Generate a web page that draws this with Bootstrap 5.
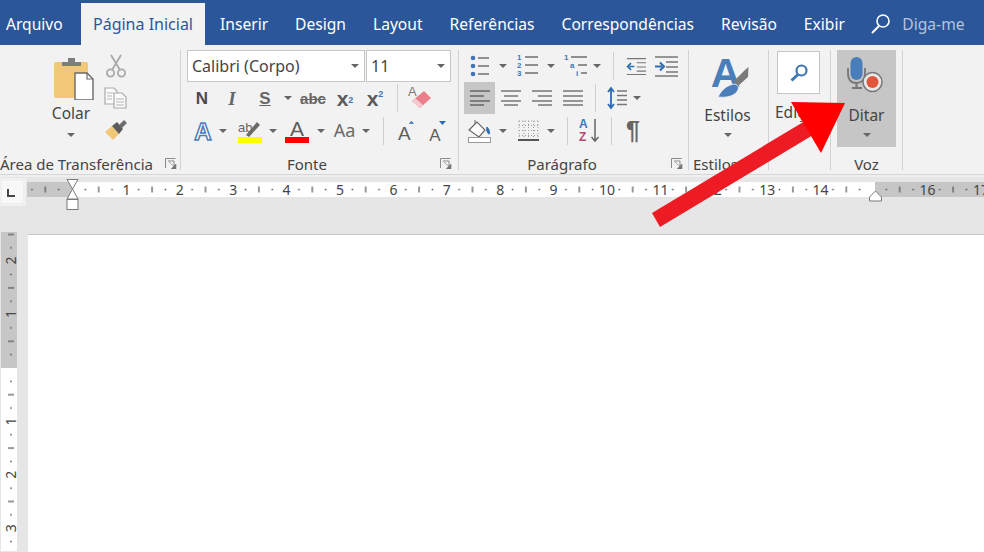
<!DOCTYPE html>
<html lang="pt">
<head>
<meta charset="utf-8">
<title>Word</title>
<link href="https://cdn.jsdelivr.net/npm/bootstrap@5.3.0/dist/css/bootstrap.min.css" rel="stylesheet">
<style>
html,body{height:100%;overflow:hidden;margin:0;background:#fff}
body{font-family:"Noto Sans","Open Sans",sans-serif;font-size:15px;color:#444;width:984px;height:552px;position:relative}
.tabbar{height:45px;background:#2b579a;padding-top:3px;flex-wrap:nowrap;white-space:nowrap}
.tabbar .nav-link{color:#fff;padding:0 13.5px;height:42px;line-height:42px;font-size:15.6px;border:0}
.tabbar .nav-link:hover{color:#fff}
.tabbar .first{padding:0 0 0 6px;width:81px}
.tabbar .nav-link.active{background:#f2f2f2;color:#2b579a;padding:0;width:124px;text-align:center;font-size:16px}
.tabbar .afteractive{padding-left:15px}
.tabbar .srch{padding:0 11px 0 13px;display:flex;align-items:center}
.tabbar .hint{color:#b4c4de;padding:0}
.ribbon{height:130px;background:#f2f2f2;padding-top:5px;border-bottom:1px solid #d6d6d6;flex:none}
.grp{height:120px;border-right:1px solid #d2d2d2;position:relative;flex:none}
.g1{width:181px}.g2{width:278px;padding-left:6px}.g3{width:230px;padding-left:5px}.g4{width:80px}.g5{width:62px}.g6{width:72px}
.gbody{height:108px}
.glabel{height:12px;line-height:12px;font-size:15px;color:#444;white-space:nowrap}
.lbl1{margin-right:12px}.lbl2{margin-right:13px}.lbl3{margin-right:11px}.lbl4{margin-right:26px}
.launch{width:12px;height:11px;flex:none;display:block;margin-right:5px}
.launch2{margin-right:6px}
.rw{height:32px}
.rw3{height:33px}
.tb{display:flex;align-items:center;justify-content:center;flex:none;height:100%}
.big{display:flex;flex-direction:column;align-items:center;flex:none;font-size:15.5px;color:#444}
.big .cap{height:22px;line-height:22px}
.cr{display:block;width:0;height:0;border-left:4px solid transparent;border-right:4px solid transparent;border-top:4px solid #666}
.colar{width:58px;margin-left:42px}
.colar svg{margin:7px 0 2px 5px}
.crw{margin-top:9px}
.smallcol{width:32px}
.smallcol .tb{height:32px}
.w6{width:6px}.w8{width:8px}.w10{width:10px}.w11{width:11px}.w12{width:12px}.w14{width:14px}.w16{width:16px}.w18{width:18px}.w20{width:20px}.w24{width:24px}.w26{width:26px}.w28{width:28px}.w30{width:30px}.w31{width:31px}.w32{width:32px}.w34{width:34px}.w36{width:36px}.w37{width:37px}.w38{width:38px}.w40{width:40px}.w42{width:42px}.w44{width:44px}
.combo{height:32px;background:#fff;border:1px solid #c6c6c6;display:flex;align-items:center;justify-content:space-between;font-size:16px;color:#444;padding:0 5px 0 4px}
.c1{width:178px}.c2{width:85px;margin-left:1px}
.gl{font-family:"Liberation Sans",sans-serif;color:#4a4a4a;line-height:1}
.gN{font-weight:700;font-size:17px}
.gI{font-family:"Liberation Serif",serif;font-style:italic;font-weight:700;font-size:19px;color:#666}
.gS{font-weight:700;font-size:17px;text-decoration:underline;color:#666}
.gabc{font-size:15px;font-weight:700;text-decoration:line-through;color:#666}
.gx{font-weight:700;font-size:21px;color:#5a5a5a}
.gx sub,.gx sup{font-size:9px;color:#3f75b5;font-weight:700}
.gAa{font-size:18px;color:#6a6a6a;font-family:"Noto Sans",sans-serif}
.gP{font-weight:700;font-size:25px;color:#666}
.vs{display:block;width:1px;height:28px;background:#cfcfcf}
.sel{background:#c6c6c6}
.estilos{width:59px;margin-left:9px}
.estilos svg{margin:-1px 0 0}
.estilos .cap{margin-top:5px}
.crw2{margin-top:7px}
.edit{margin-left:8px;width:43px}
.ebox{width:43px;height:43px;background:#fff;border:1px solid #c6c6c6;margin-top:1px;flex:none}
.ecap{height:22px;line-height:22px;font-size:15.5px;margin-top:7px;white-space:nowrap;margin-left:-2px;align-self:flex-start}
.ditar{width:59px;margin-left:6px;height:97px;background:#c6c6c6}
.ditar svg{margin:4px 0 0}
.ditar .cap{margin-top:10px}
.band{height:55px;background:#e6e6e6;margin-top:2px;flex:none;box-shadow:0 -2px 0 #efefef}
.band svg,.vrul svg{display:block}
.rtxt{font-family:"Noto Sans",sans-serif;font-size:14px;fill:#444;text-anchor:middle}
.lower{flex:1 1 auto;min-height:0;background:#e6e6e6}
.vrul{width:28px;background:#e6e6e6;flex:none}
.sheet{flex:1 1 auto;background:#fff;border-top:1px solid #c6c6c6;margin-top:2px}
.overlay{position:absolute;left:0;top:0;pointer-events:none}
</style>
</head>
<body class="d-flex flex-column">
<ul class="nav tabbar flex-shrink-0">
  <li class="nav-item"><a class="nav-link first" href="#">Arquivo</a></li>
  <li class="nav-item"><a class="nav-link active" href="#">Página Inicial</a></li>
  <li class="nav-item"><a class="nav-link afteractive" href="#">Inserir</a></li>
  <li class="nav-item"><a class="nav-link" href="#">Design</a></li>
  <li class="nav-item"><a class="nav-link" href="#">Layout</a></li>
  <li class="nav-item"><a class="nav-link" href="#">Referências</a></li>
  <li class="nav-item"><a class="nav-link" href="#">Correspondências</a></li>
  <li class="nav-item"><a class="nav-link" href="#">Revisão</a></li>
  <li class="nav-item"><a class="nav-link" href="#">Exibir</a></li>
  <li class="nav-item srch"><svg width="20" height="22" viewBox="0 0 20 22"><circle cx="12" cy="8" r="6" fill="none" stroke="#fff" stroke-width="1.6"/><path d="M8 13 1 20" stroke="#fff" stroke-width="2"/></svg></li>
  <li class="nav-item"><a class="nav-link hint" href="#">Diga-me</a></li>
</ul>

<div class="ribbon d-flex">
  <!-- Área de Transferência -->
  <div class="grp g1">
    <div class="gbody d-flex">
      <div class="big colar">
        <svg width="40" height="43" viewBox="0 0 40 43"><rect x="0" y="5" width="34" height="36" rx="2" fill="#f0c878"/><path d="M8 9V5h6V1h7v4h6v4z" fill="#7d7d7d"/><path d="M21 16h12l6 6v21H21z" fill="#fff" stroke="#6a6a6a" stroke-width="1.4"/><path d="M33 16v6h6" fill="none" stroke="#6a6a6a" stroke-width="1.2"/></svg>
        <span class="cap">Colar</span>
        <span class="crw"><i class="cr"></i></span>
      </div>
      <div class="smallcol d-flex flex-column">
        <span class="tb"><svg width="22" height="24" viewBox="0 0 22 24"><g fill="none" stroke="#a9a9a9" stroke-width="1.8"><path d="M6 1 15 16M16 1 7 16"/><circle cx="5.5" cy="19" r="3.6"/><circle cx="16.5" cy="19" r="3.6"/></g></svg></span>
        <span class="tb"><svg width="24" height="22" viewBox="0 0 24 22"><g fill="#fafafa" stroke="#a9a9a9" stroke-width="1.2"><path d="M1 1h9l3 3v13H1z"/><path d="M10 6h8l4 4v11H10z"/></g><path d="M3 6h6M3 9h5M3 12h5M12 12h8M12 15h8M12 18h8" stroke="#b5b5b5"/></svg></span>
        <span class="tb"><svg width="24" height="22" viewBox="0 0 24 22"><path d="M1 13 8 7l7 8-6 6z" fill="#f0c878"/><path d="M8 7l5-4 6 7-4 5z" fill="#5c5c5c"/><path d="M15 6l5-5 3 3-5 5z" fill="#6c6c6c"/></svg></span>
      </div>
    </div>
    <div class="d-flex">
      <div class="glabel lbl1 flex-grow-1 text-center">Área de Transferência</div>
      <svg class="launch" viewBox="0 0 12 11"><path d="M.5 10V.5h10M3 3h6v7" fill="none" stroke="#8a8a8a"/><path d="M4 4l7 6.5M11 6v5H6z" fill="#777" stroke="#777" stroke-width=".6"/></svg>
    </div>
  </div>

  <!-- Fonte -->
  <div class="grp g2">
    <div class="gbody">
      <div class="rw d-flex">
        <div class="combo c1"><span>Calibri (Corpo)</span><i class="cr"></i></div>
        <div class="combo c2"><span>11</span><i class="cr"></i></div>
      </div>
      <div class="rw d-flex">
        <span class="tb w30 gl gN">N</span>
        <span class="tb w30 gl gI">I</span>
        <span class="tb w36 gl gS">S</span>
        <span class="tb w10"><i class="cr"></i></span>
        <span class="tb w40 gl gabc">abc</span>
        <span class="tb w24 gl gx">x<sub>2</sub></span>
        <span class="tb w36 gl gx">x<sup>2</sup></span>
        <span class="tb w8"><i class="vs"></i></span>
        <span class="tb w38"><svg width="24" height="26" viewBox="0 0 24 26"><text x="0" y="11" font-family="Liberation Sans" font-size="13" fill="#7a7a7a">A</text><path d="M4 16 16 6l7 7-11 10z" fill="#ea7f8b"/><path d="M4 16l8 7 3-3-8-7z" fill="#f6c9ce"/></svg></span>
      </div>
      <div class="rw rw3 d-flex">
        <span class="tb w32"><svg width="22" height="30" viewBox="0 -3 22 30"><text x="11" y="21" text-anchor="middle" font-family="Liberation Sans" font-weight="700" font-size="24" fill="#fff" stroke="#4a7ebb" stroke-width="1.5">A</text></svg></span>
        <span class="tb w8"><i class="cr"></i></span>
        <span class="tb w40 ps-1"><svg width="25" height="26" viewBox="0 0 25 26"><text x="1" y="14" font-family="Liberation Sans" font-size="13" fill="#666">ab</text><path d="M9 17 20 4l3 3-11 12z" fill="#6a6a6a"/><rect x="1" y="19" width="24" height="6" fill="#ffff00"/></svg></span>
        <span class="tb w11"><i class="cr"></i></span>
        <span class="tb w38"><svg width="24" height="26" viewBox="0 0 24 26"><text x="12" y="18" text-anchor="middle" font-family="Liberation Sans" font-size="21" fill="#5e5e5e">A</text><rect x="0" y="19" width="24" height="6" fill="#ff0000"/></svg></span>
        <span class="tb w10"><i class="cr"></i></span>
        <span class="tb w37 gAa">Aa</span>
        <span class="tb w6"><i class="cr"></i></span>
        <span class="tb w28"><i class="vs"></i></span>
        <span class="tb w18"><svg width="20" height="30" viewBox="0 -3 20 30"><text x="8" y="22" text-anchor="middle" font-family="Liberation Sans" font-size="21" fill="#5e5e5e">A</text><path d="M13 4l3-3 3 3z" fill="#2b6cb3"/></svg></span>
        <span class="tb w44"><svg width="20" height="30" viewBox="0 -3 20 30"><text x="8" y="22" text-anchor="middle" font-family="Liberation Sans" font-size="17" fill="#5e5e5e">A</text><path d="M12 2h7l-3.500 4z" fill="#2b6cb3"/></svg></span>
      </div>
    </div>
    <div class="d-flex">
      <div class="glabel lbl2 flex-grow-1 text-center">Fonte</div>
      <svg class="launch launch2" viewBox="0 0 12 11"><path d="M.5 10V.5h10M3 3h6v7" fill="none" stroke="#8a8a8a"/><path d="M4 4l7 6.500M11 6v5H6z" fill="#777" stroke="#777" stroke-width=".6"/></svg>
    </div>
  </div>

  <!-- Parágrafo -->
  <div class="grp g3">
    <div class="gbody">
      <div class="rw d-flex">
        <span class="tb w31"><svg width="20" height="23" viewBox="0 0 20 23"><g fill="#3f75b5"><circle cx="3" cy="3" r="2.300"/><circle cx="3" cy="11" r="2.300"/><circle cx="3" cy="19" r="2.300"/></g><path d="M8 3h11M8 11h11M8 19h11" stroke="#6f6f6f" stroke-width="1.500"/></svg></span>
        <span class="tb w16"><i class="cr"></i></span>
        <span class="tb w34"><svg width="22" height="26" viewBox="0 0 22 26"><g font-family="Liberation Sans" font-size="8" font-weight="700" fill="#3f75b5"><text x="0" y="7">1</text><text x="0" y="15">2</text><text x="0" y="23">3</text></g><path d="M8 4h13M8 12h13M8 20h13" stroke="#6f6f6f" stroke-width="1.500"/></svg></span>
        <span class="tb w12"><i class="cr"></i></span>
        <span class="tb w37"><svg width="24" height="26" viewBox="0 0 24 26"><g font-family="Liberation Sans" font-size="8" font-weight="700" fill="#3f75b5"><text x="0" y="7">1</text><text x="6" y="15">a</text><text x="12" y="23">i</text></g><path d="M7 4h16M14 12h9M17 20h6" stroke="#6f6f6f" stroke-width="1.500"/></svg></span>
        <span class="tb w6"><i class="cr"></i></span>
        <span class="tb w26"><i class="vs"></i></span>
        <span class="tb w20"><svg width="24" height="21" viewBox="0 0 24 21"><path d="M1 1h23M13 6h11M13 11h11M13 16h11M1 20h23" stroke="#777" stroke-width="1.300"/><path d="M10 10.500H4M6 6.500l-4 4 4 4" fill="none" stroke="#2b6cb3" stroke-width="2"/></svg></span>
        <span class="tb w42"><svg width="24" height="21" viewBox="0 0 24 21"><path d="M0 1h23M11 6h12M11 11h12M11 16h12M0 20h23" stroke="#777" stroke-width="1.300"/><path d="M0 10.500h7M5 6.500l4 4-4 4" fill="none" stroke="#2b6cb3" stroke-width="2"/></svg></span>
      </div>
      <div class="rw d-flex">
        <span class="tb w31 sel"><svg width="20" height="16" viewBox="0 0 20 16"><path d="M0 1h20M0 6h14M0 11h20M0 15h14" stroke="#666" stroke-width="1.500"/></svg></span>
        <span class="tb w31"><svg width="20" height="16" viewBox="0 0 20 16"><path d="M0 1h20M3 6h14M0 11h20M3 15h14" stroke="#777" stroke-width="1.500"/></svg></span>
        <span class="tb w31"><svg width="20" height="16" viewBox="0 0 20 16"><path d="M0 1h20M6 6h14M0 11h20M6 15h14" stroke="#777" stroke-width="1.500"/></svg></span>
        <span class="tb w31"><svg width="20" height="16" viewBox="0 0 20 16"><path d="M0 1h20M0 6h20M0 11h20M0 15h20" stroke="#777" stroke-width="1.500"/></svg></span>
        <span class="tb w14"><i class="vs"></i></span>
        <span class="tb w30"><svg width="21" height="24" viewBox="0 0 21 24"><path d="M4 2v20M1 6l3-4 3 4M1 18l3 4 3-4" fill="none" stroke="#2b6cb3" stroke-width="1.800"/><path d="M10 5h10M10 9.500h10M10 14h10M10 18.500h10" stroke="#777" stroke-width="1.500"/></svg></span>
        <span class="tb w10"><i class="cr"></i></span>
      </div>
      <div class="rw rw3 d-flex">
        <span class="tb w31"><svg width="24" height="24" viewBox="0 0 24 24"><path d="M1 11 9 3l8 8-6 7z" fill="#fff" stroke="#666" stroke-width="1.200"/><path d="M7 5V1" stroke="#666"/><path d="M19 8c3 3 3 7 2 7s-3-3-2-7z" fill="#2b6cb3" stroke="#2b6cb3"/><rect x=".5" y="18.500" width="22" height="5" fill="#fff" stroke="#999"/></svg></span>
        <span class="tb w16"><i class="cr"></i></span>
        <span class="tb w34"><svg width="21" height="21" viewBox="0 0 21 21"><path d="M1 1h19M1 5.500h19M1 10.500h19M1 15.500h19" stroke="#9a9a9a" stroke-dasharray="1 2"/><path d="M1 1v19M6 1v19M10.500 1v19M15.500 1v19M20 1v19" stroke="#9a9a9a" stroke-dasharray="1 2"/><path d="M0 20h21" stroke="#555" stroke-width="2"/></svg></span>
        <span class="tb w12"><i class="cr"></i></span>
        <span class="tb w20"><i class="vs"></i></span>
        <span class="tb w26"><svg width="22" height="28" viewBox="0 0 22 28"><g font-family="Liberation Sans" font-weight="700" font-size="12"><text x="0" y="11" fill="#3f75b5">A</text><text x="0" y="24" fill="#b8476f">Z</text></g><path d="M16 2v22M12.500 20l3.500 4 3.500-4" fill="none" stroke="#666" stroke-width="1.500"/></svg></span>
        <span class="tb w16"><i class="vs"></i></span>
        <span class="tb w28 gl gP">¶</span>
      </div>
    </div>
    <div class="d-flex">
      <div class="glabel lbl3 flex-grow-1 text-center">Parágrafo</div>
      <svg class="launch" viewBox="0 0 12 11"><path d="M.5 10V.5h10M3 3h6v7" fill="none" stroke="#8a8a8a"/><path d="M4 4l7 6.500M11 6v5H6z" fill="#777" stroke="#777" stroke-width=".6"/></svg>
    </div>
  </div>

  <!-- Estilos -->
  <div class="grp g4">
    <div class="gbody">
      <div class="big estilos">
        <svg width="42" height="50" viewBox="0 -6 42 50"><text x="18.500" y="32" text-anchor="middle" font-family="Liberation Sans" font-weight="700" font-size="41" fill="#4a7ebb">A</text><path d="M27 26 38 15l3.500-3-.5 10-10 9z" fill="#7a7a7a"/><path d="M11 42c3-6 8-12 17-13 3 1 4 3 3 6-3 6-11 8-20 7z" fill="#4a7ebb" stroke="#f2f2f2" stroke-width=".8"/></svg>
        <span class="cap">Estilos</span>
        <span class="crw2"><i class="cr"></i></span>
      </div>
    </div>
    <div class="d-flex ps-1">
      <div class="glabel lbl4 flex-grow-1">Estilos</div>
    </div>
  </div>

  <!-- Edição -->
  <div class="grp g5">
    <div class="gbody">
      <div class="big edit">
        <div class="ebox d-flex align-items-center justify-content-center">
          <svg width="20" height="20" viewBox="0 0 20 20"><circle cx="12.500" cy="7.500" r="5" fill="none" stroke="#3f75b5" stroke-width="2.200"/><path d="M9 11.500 2.500 17.500" stroke="#3f75b5" stroke-width="3"/></svg>
        </div>
        <span class="ecap">Edição</span>
      </div>
    </div>
  </div>

  <!-- Voz -->
  <div class="grp g6">
    <div class="gbody">
      <div class="big ditar">
        <svg width="42" height="40" viewBox="0 0 42 40"><path d="M2 14v5c0 7 3 10 8.500 10s8.500-3 8.500-10v-5" fill="none" stroke="#777" stroke-width="1.800"/><rect x="4.500" y="3" width="12" height="23" rx="6" fill="#4a7ebb"/><path d="M10.500 29v4M6 34h10" stroke="#777" stroke-width="2"/><circle cx="26.500" cy="28" r="9.500" fill="#e8e8e8" stroke="#777" stroke-width="1.500"/><circle cx="26.500" cy="28" r="6" fill="#e0563b"/></svg>
        <span class="cap">Ditar</span>
        <span class="crw2"><i class="cr"></i></span>
      </div>
    </div>
    <div class="glabel text-center">Voz</div>
  </div>
</div>

<div class="band">
  <svg width="984" height="55" viewBox="0 178 984 55">
    <defs>
      <pattern id="rh" x="72" y="178" width="53.4" height="55" patternUnits="userSpaceOnUse">
        <rect x="12.6" y="11.800" width="1.500" height="1.500" fill="#555"/>
        <rect x="26.100" y="9.500" width="1.200" height="6" fill="#555"/>
        <rect x="39.300" y="11.800" width="1.500" height="1.500" fill="#555"/>
      </pattern>
    </defs>
    <rect x="0" y="179" width="26" height="28" fill="#f0f0f0"/>
    <rect x="2" y="182" width="21" height="22" fill="#f8f8f8"/>
    <path d="M8 190v7h7" fill="none" stroke="#444" stroke-width="2"/>
    <rect x="27" y="183" width="45" height="15" fill="#c6c6c6"/>
    <rect x="72" y="183" width="803" height="15" fill="#fff"/>
    <rect x="875" y="183" width="109" height="15" fill="#c6c6c6"/>
    <rect x="27" y="183" width="957" height="15" fill="url(#rh)"/>
    <text class="rtxt" x="126.400" y="196">1</text><text class="rtxt" x="179.800" y="196">2</text><text class="rtxt" x="233.200" y="196">3</text><text class="rtxt" x="286.600" y="196">4</text><text class="rtxt" x="340" y="196">5</text><text class="rtxt" x="393.400" y="196">6</text><text class="rtxt" x="446.800" y="196">7</text><text class="rtxt" x="500.200" y="196">8</text><text class="rtxt" x="553.600" y="196">9</text><text class="rtxt" x="607" y="196">10</text><text class="rtxt" x="660.400" y="196">11</text><text class="rtxt" x="713.800" y="196">12</text><text class="rtxt" x="767.200" y="196">13</text><text class="rtxt" x="820.600" y="196">14</text><text class="rtxt" x="927.400" y="196">16</text><text class="rtxt" x="981" y="196">17</text>
    <path d="M67 180.500h11l-5.500 9.500 5.500 10h-11l5.500-10z" fill="#fff" stroke="#7a7a7a"/>
    <rect x="67" y="200.500" width="11" height="10" fill="#fff" stroke="#7a7a7a"/>
    <path d="M875.500 192l6 6v4h-12v-4z" fill="#fff" stroke="#7a7a7a"/>
  </svg>
</div>

<div class="lower d-flex">
  <div class="vrul">
    <svg width="28" height="319" viewBox="0 233 28 319">
      <defs>
        <pattern id="rv" x="0" y="369" width="28" height="53.4" patternUnits="userSpaceOnUse">
          <rect x="10.200" y="12.600" width="1.500" height="1.500" fill="#555"/>
          <rect x="8" y="26.100" width="6" height="1.200" fill="#555"/>
          <rect x="10.200" y="39.300" width="1.500" height="1.500" fill="#555"/>
        </pattern>
      </defs>
      <rect x="1" y="233" width="16" height="136" fill="#c6c6c6"/>
      <rect x="1" y="369" width="16" height="183" fill="#fff"/>
      <rect x="1" y="233" width="16" height="319" fill="url(#rv)"/>
      <text class="rtxt" transform="translate(16 261.600) rotate(-90)">2</text>
      <text class="rtxt" transform="translate(16 315) rotate(-90)">1</text>
      <text class="rtxt" transform="translate(16 422.400) rotate(-90)">1</text>
      <text class="rtxt" transform="translate(16 475.800) rotate(-90)">2</text>
      <text class="rtxt" transform="translate(16 529.200) rotate(-90)">3</text>
    </svg>
  </div>
  <div class="sheet"></div>
</div>

<svg class="overlay" width="984" height="552" viewBox="0 0 984 552">
  <path d="M652 213 805 121 813 135 660 227z" fill="#ed1c24"/>
  <path d="M791 102 845 103 821 153z" fill="#fe0000"/>
</svg>
<script src="https://cdn.jsdelivr.net/npm/bootstrap@5.3.0/dist/js/bootstrap.bundle.min.js"></script>
</body>
</html>
